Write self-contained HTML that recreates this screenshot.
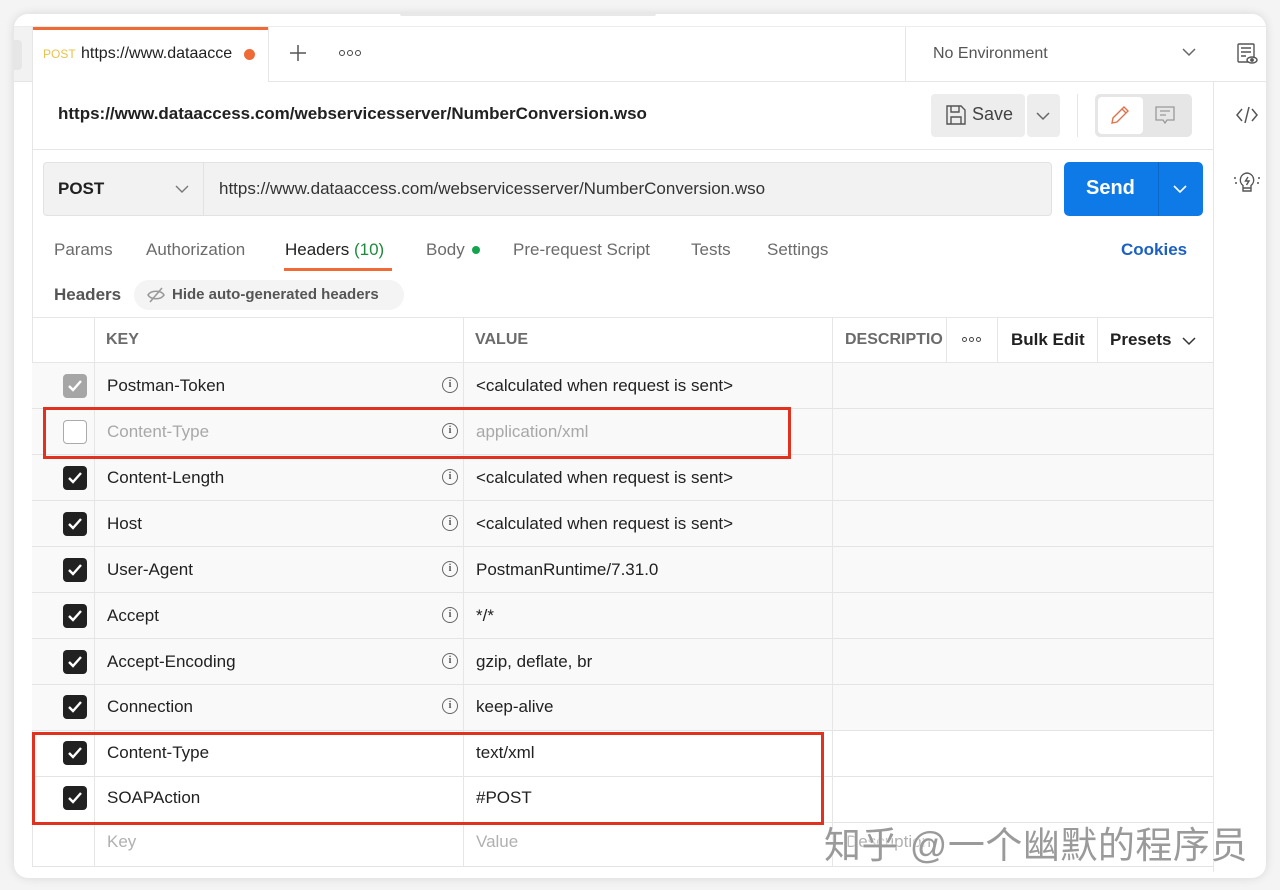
<!DOCTYPE html>
<html><head><meta charset="utf-8"><style>
*{margin:0;padding:0;box-sizing:border-box}
body{width:1280px;height:890px;background:#f4f4f4;font-family:"Liberation Sans",sans-serif;color:#212121;position:relative;overflow:hidden}
.a{position:absolute}
.win{left:14px;top:14px;width:1252px;height:864px;background:#fff;border-radius:14px;box-shadow:0 0 10px rgba(0,0,0,.12);overflow:hidden}
.t{position:absolute;white-space:nowrap}
.hl{position:absolute;height:1px;background:#e6e6e6}
.vl{position:absolute;width:1px;background:#e6e6e6}
.cb{position:absolute;left:63px;width:24px;height:24px;border-radius:4px;background:#212121}
.cb svg{position:absolute;left:4px;top:5px}
.info{position:absolute;left:442px;width:16px;height:16px;border:1.3px solid #666;border-radius:50%;font:bold 10px "Liberation Serif",serif;color:#555;text-align:center;line-height:14px}
.row{position:absolute;left:32px;width:1181px;height:46px;border-bottom:1px solid #e4e4e4}
.r17{font-size:17px}
.dots{position:absolute;display:flex;gap:2px}
.dots i{display:block;width:6px;height:6px;border:1.4px solid #444;border-radius:50%}
</style></head><body>
<div class="a win"></div>
<div class="a" style="left:14px;top:27px;width:18px;height:55px;background:#f2f2f2"></div>
<div class="a" style="left:14px;top:40px;width:8px;height:30px;background:#e6e6e6;border-radius:0 4px 4px 0"></div>
<div class="a" style="left:400px;top:12px;width:256px;height:4px;background:#e8e8e8;border-radius:2px"></div>
<div class="hl" style="left:14px;top:26px;width:1252px;background:#ececec"></div>
<div class="hl" style="left:268px;top:81px;width:998px"></div>
<div class="hl" style="left:14px;top:81px;width:18px"></div>
<div class="a" style="left:32px;top:27px;width:236px;height:3px;background:#f06a35"></div>
<div class="vl" style="left:268px;top:27px;height:55px"></div>
<div class="vl" style="left:32px;top:27px;height:840px"></div>
<div class="t" style="left:43px;top:47px;font-size:12px;color:#e8c24a">POST</div>
<div class="t" style="left:81px;top:45px;font-size:16px;width:155px;overflow:hidden">https://www.dataacce</div>
<div class="a" style="left:244px;top:49px;width:11px;height:11px;border-radius:50%;background:#f06a35"></div>
<svg class="a" style="left:289px;top:44px" width="18" height="18"><path d="M9 1v16M1 9h16" stroke="#555" stroke-width="1.5"/></svg>
<div class="dots" style="left:339px;top:50px"><i></i><i></i><i></i></div>
<div class="vl" style="left:905px;top:27px;height:55px"></div>
<div class="t" style="left:933px;top:45px;font-size:16px;color:#555">No Environment</div>
<svg class="a" style="left:1182px;top:47px" width="14" height="10"><path d="M1 2l6 6 6-6" fill="none" stroke="#666" stroke-width="1.5"/></svg>
<svg class="a" style="left:1236px;top:42px" width="24" height="24" fill="none" stroke="#555" stroke-width="1.4"><rect x="2" y="2" width="16" height="18" rx="1"/><path d="M5 6h10M5 10h10M5 14h5"/><ellipse cx="16" cy="18" rx="5" ry="3" fill="#fff"/><circle cx="16" cy="18" r="1.2" fill="#555"/></svg>
<div class="vl" style="left:1213px;top:82px;height:790px"></div>
<svg class="a" style="left:1235px;top:104px" width="24" height="22" fill="none" stroke="#555" stroke-width="1.5"><path d="M7 5l-5 6 5 6M17 5l5 6-5 6M14 3l-4 16"/></svg>
<svg class="a" style="left:1233px;top:168px" width="28" height="28" fill="none" stroke="#555" stroke-width="1.4"><path d="M10 20v3h8v-3M14 5a7 7 0 0 0-4 12.5V20h8v-2.5A7 7 0 0 0 14 5z"/><path d="M15 9l-2.5 4h3.5l-2.5 4"/><path d="M1 10h2M25 10h2M2 15h2M24 15h2"/></svg>
<div class="t" style="left:58px;top:104px;font-size:17px;font-weight:bold">https://www.dataaccess.com/webservicesserver/NumberConversion.wso</div>
<div class="a" style="left:931px;top:94px;width:94px;height:43px;background:#ededed;border-radius:4px"></div>
<svg class="a" style="left:945px;top:104px" width="22" height="22" fill="none" stroke="#555" stroke-width="1.4"><path d="M2 2h14l4 4v14H2z"/><path d="M6 2v6h8V2M6 20v-7h10v7"/></svg>
<div class="t" style="left:972px;top:104px;font-size:18px;color:#444">Save</div>
<div class="a" style="left:1027px;top:94px;width:33px;height:43px;background:#ededed;border-radius:4px"></div>
<svg class="a" style="left:1036px;top:111px" width="14" height="10"><path d="M1 2l6 6 6-6" fill="none" stroke="#666" stroke-width="1.5"/></svg>
<div class="vl" style="left:1077px;top:94px;height:43px"></div>
<div class="a" style="left:1095px;top:94px;width:97px;height:43px;background:#e6e6e6;border-radius:5px"></div>
<div class="a" style="left:1098px;top:97px;width:45px;height:37px;background:#fff;border-radius:4px"></div>
<svg class="a" style="left:1109px;top:104px" width="22" height="22" fill="none" stroke="#e0724a" stroke-width="1.4"><path d="M3 19l1-5L15 3l4 4L8 18z M13 5l4 4"/></svg>
<svg class="a" style="left:1154px;top:105px" width="22" height="20" fill="none" stroke="#999" stroke-width="1.3"><path d="M2 2h18v13H13l-2 3-2-3H2z M6 6h10M6 10h6"/></svg>
<div class="hl" style="left:32px;top:149px;width:1181px"></div>
<div class="a" style="left:43px;top:162px;width:1009px;height:54px;background:#f2f2f2;border:1px solid #e2e2e2;border-radius:4px"></div>
<div class="vl" style="left:203px;top:163px;height:52px;background:#e2e2e2"></div>
<div class="t" style="left:58px;top:179px;font-size:17px;font-weight:bold">POST</div>
<svg class="a" style="left:175px;top:184px" width="14" height="10"><path d="M1 2l6 6 6-6" fill="none" stroke="#777" stroke-width="1.4"/></svg>
<div class="t" style="left:219px;top:179px;font-size:17px;color:#333">https://www.dataaccess.com/webservicesserver/NumberConversion.wso</div>
<div class="a" style="left:1064px;top:162px;width:139px;height:54px;background:#0d7ae8;border-radius:5px"></div>
<div class="vl" style="left:1158px;top:162px;height:54px;background:#0a68c8"></div>
<div class="t" style="left:1086px;top:177px;font-size:20px;font-weight:bold;color:#fff">Send</div>
<svg class="a" style="left:1173px;top:184px" width="14" height="10"><path d="M1 2l6 6 6-6" fill="none" stroke="#fff" stroke-width="1.6"/></svg>
<div class="t" style="left:54px;top:240px;font-size:17px;color:#6b6b6b">Params</div>
<div class="t" style="left:146px;top:240px;font-size:17px;color:#6b6b6b">Authorization</div>
<div class="t" style="left:285px;top:240px;font-size:17px;color:#212121">Headers <span style="color:#1f8a3c">(10)</span></div>
<div class="a" style="left:284px;top:268px;width:108px;height:3px;background:#f06a35"></div>
<div class="t" style="left:426px;top:240px;font-size:17px;color:#6b6b6b">Body</div>
<div class="a" style="left:472px;top:246px;width:8px;height:8px;border-radius:50%;background:#14a44d"></div>
<div class="t" style="left:513px;top:240px;font-size:17px;color:#6b6b6b">Pre-request Script</div>
<div class="t" style="left:691px;top:240px;font-size:17px;color:#6b6b6b">Tests</div>
<div class="t" style="left:767px;top:240px;font-size:17px;color:#6b6b6b">Settings</div>
<div class="t" style="left:1121px;top:240px;font-size:17px;font-weight:bold;color:#1c61c2">Cookies</div>
<div class="t" style="left:54px;top:285px;font-size:17px;font-weight:bold;color:#555">Headers</div>
<div class="a" style="left:134px;top:280px;width:270px;height:30px;background:#f4f4f4;border-radius:15px"></div>
<svg class="a" style="left:146px;top:286px" width="20" height="18" fill="none" stroke="#999" stroke-width="1.6"><path d="M2 9c3-5 13-5 16 0-3 5-13 5-16 0z"/><path d="M4 16L16 2"/></svg>
<div class="t" style="left:172px;top:286px;font-size:15px;font-weight:bold;color:#555">Hide auto-generated headers</div>
<div class="hl" style="left:32px;top:317px;width:1181px"></div>
<div class="hl" style="left:32px;top:362px;width:1181px"></div>
<div class="t" style="left:106px;top:331px;font-size:16px;font-weight:bold;color:#6b6b6b">KEY</div>
<div class="t" style="left:475px;top:331px;font-size:16px;font-weight:bold;color:#6b6b6b">VALUE</div>
<div class="t" style="left:845px;top:331px;font-size:16px;font-weight:bold;color:#6b6b6b;width:98px;overflow:hidden">DESCRIPTION</div>
<div class="dots" style="left:962px;top:337px"><i style="width:5px;height:5px"></i><i style="width:5px;height:5px"></i><i style="width:5px;height:5px"></i></div>
<div class="t" style="left:1011px;top:330px;font-size:17px;font-weight:bold">Bulk Edit</div>
<div class="t" style="left:1110px;top:330px;font-size:17px;font-weight:bold">Presets</div>
<svg class="a" style="left:1182px;top:336px" width="14" height="10"><path d="M1 2l6 6 6-6" fill="none" stroke="#333" stroke-width="1.5"/></svg>
<div class="vl" style="left:946px;top:318px;height:44px"></div>
<div class="vl" style="left:997px;top:318px;height:44px"></div>
<div class="vl" style="left:1097px;top:318px;height:44px"></div>
<div class="row" style="top:363px;background:#f9f9f9"></div>
<div class="row" style="top:409px;background:#f9f9f9"></div>
<div class="row" style="top:455px;background:#f9f9f9"></div>
<div class="row" style="top:501px;background:#f9f9f9"></div>
<div class="row" style="top:547px;background:#f9f9f9"></div>
<div class="row" style="top:593px;background:#f9f9f9"></div>
<div class="row" style="top:639px;background:#f9f9f9"></div>
<div class="row" style="top:685px;background:#f9f9f9"></div>
<div class="row" style="top:731px"></div>
<div class="row" style="top:777px"></div>
<div class="row" style="top:823px;height:44px"></div>
<div class="vl" style="left:94px;top:318px;height:549px"></div>
<div class="vl" style="left:463px;top:318px;height:549px"></div>
<div class="vl" style="left:832px;top:318px;height:549px"></div>

<div class="cb" style="top:374px;background:#a6a6a6"><svg width="16" height="14"><path d="M2 7l4 4 8-9" fill="none" stroke="#fff" stroke-width="2.4"/></svg></div>
<div class="t r17" style="left:107px;top:376px">Postman-Token</div><div class="info" style="top:377px">i</div>
<div class="t r17" style="left:476px;top:376px">&lt;calculated when request is sent&gt;</div>

<div class="cb" style="top:420px;background:#fff;border:1.5px solid #aaa"></div>
<div class="t r17" style="left:107px;top:422px;color:#a8a8a8">Content-Type</div><div class="info" style="top:423px">i</div>
<div class="t r17" style="left:476px;top:422px;color:#a8a8a8">application/xml</div>

<div class="cb" style="top:466px"><svg width="16" height="14"><path d="M2 7l4 4 8-9" fill="none" stroke="#fff" stroke-width="2.4"/></svg></div>
<div class="t r17" style="left:107px;top:468px">Content-Length</div><div class="info" style="top:469px">i</div>
<div class="t r17" style="left:476px;top:468px">&lt;calculated when request is sent&gt;</div>

<div class="cb" style="top:512px"><svg width="16" height="14"><path d="M2 7l4 4 8-9" fill="none" stroke="#fff" stroke-width="2.4"/></svg></div>
<div class="t r17" style="left:107px;top:514px">Host</div><div class="info" style="top:515px">i</div>
<div class="t r17" style="left:476px;top:514px">&lt;calculated when request is sent&gt;</div>

<div class="cb" style="top:558px"><svg width="16" height="14"><path d="M2 7l4 4 8-9" fill="none" stroke="#fff" stroke-width="2.4"/></svg></div>
<div class="t r17" style="left:107px;top:560px">User-Agent</div><div class="info" style="top:561px">i</div>
<div class="t r17" style="left:476px;top:560px">PostmanRuntime/7.31.0</div>

<div class="cb" style="top:604px"><svg width="16" height="14"><path d="M2 7l4 4 8-9" fill="none" stroke="#fff" stroke-width="2.4"/></svg></div>
<div class="t r17" style="left:107px;top:606px">Accept</div><div class="info" style="top:607px">i</div>
<div class="t r17" style="left:476px;top:606px">*/*</div>

<div class="cb" style="top:650px"><svg width="16" height="14"><path d="M2 7l4 4 8-9" fill="none" stroke="#fff" stroke-width="2.4"/></svg></div>
<div class="t r17" style="left:107px;top:652px">Accept-Encoding</div><div class="info" style="top:653px">i</div>
<div class="t r17" style="left:476px;top:652px">gzip, deflate, br</div>

<div class="cb" style="top:695px"><svg width="16" height="14"><path d="M2 7l4 4 8-9" fill="none" stroke="#fff" stroke-width="2.4"/></svg></div>
<div class="t r17" style="left:107px;top:697px">Connection</div><div class="info" style="top:698px">i</div>
<div class="t r17" style="left:476px;top:697px">keep-alive</div>

<div class="cb" style="top:741px"><svg width="16" height="14"><path d="M2 7l4 4 8-9" fill="none" stroke="#fff" stroke-width="2.4"/></svg></div>
<div class="t r17" style="left:107px;top:743px">Content-Type</div>
<div class="t r17" style="left:476px;top:743px">text/xml</div>

<div class="cb" style="top:786px"><svg width="16" height="14"><path d="M2 7l4 4 8-9" fill="none" stroke="#fff" stroke-width="2.4"/></svg></div>
<div class="t r17" style="left:107px;top:788px">SOAPAction</div>
<div class="t r17" style="left:476px;top:788px">#POST</div>

<div class="t r17" style="left:107px;top:832px;color:#b0b0b0">Key</div>
<div class="t r17" style="left:476px;top:832px;color:#b0b0b0">Value</div>
<div class="t r17" style="left:846px;top:832px;color:#b0b0b0">Description</div>

<div class="a" style="left:43px;top:407px;width:748px;height:52px;border:3px solid #e0321e"></div>
<div class="a" style="left:32px;top:732px;width:792px;height:93px;border:3px solid #e0321e"></div>

<div class="t" style="left:824px;top:815px;font-family:'Liberation Sans','Noto Sans CJK SC',sans-serif;font-size:37px;letter-spacing:0.5px;color:rgba(120,120,120,.75);text-shadow:0 0 2px #fff,0 0 2px #fff">知乎 @一个幽默的程序员</div>
</body></html>
